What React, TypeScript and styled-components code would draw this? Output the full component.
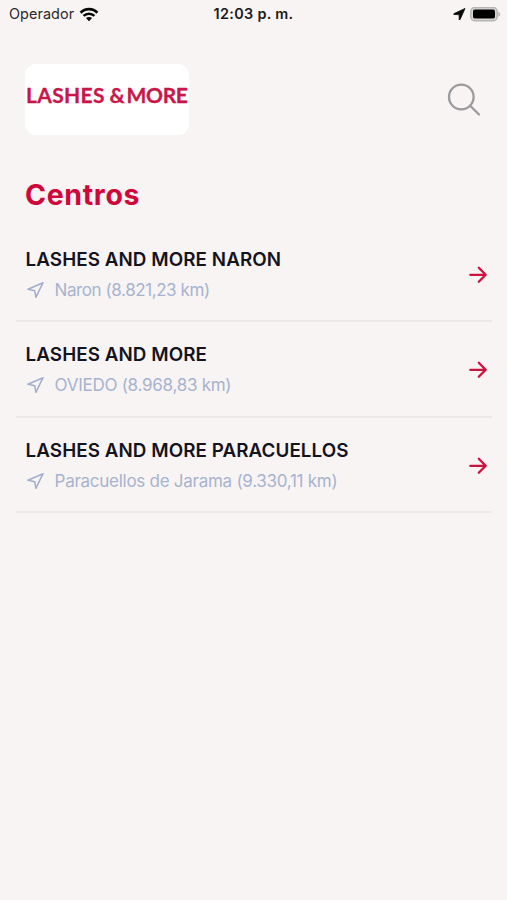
import React from 'react';
import styled, { createGlobalStyle } from 'styled-components';

const GlobalStyle = createGlobalStyle`
  * { box-sizing: border-box; }
  body {
    margin: 0;
    background: #f8f4f3;
    font-family: Inter, 'Liberation Sans', sans-serif;
  }
  h1, h2, p, ul { margin: 0; padding: 0; }
`;

const Screen = styled.div`
  width: 507px;
  height: 900px;
  background: #f8f4f3;
  overflow: hidden;
  display: flex;
  flex-direction: column;
`;

const StatusBar = styled.div`
  height: 28px;
  padding: 0 6px 0 9px;
  display: grid;
  grid-template-columns: 1fr auto 1fr;
  align-items: center;
  color: #1b191b;
`;

const Carrier = styled.div`
  display: flex;
  align-items: center;
  gap: 5px;
  font-size: 14.4px;
  line-height: 28px;
  letter-spacing: 0.08px;
  color: #2b292b;
`;

const Clock = styled.div`
  padding-right: 3px;
  font-size: 14.4px;
  font-weight: 600;
  line-height: 28px;
  letter-spacing: 0.32px;
`;

const Indicators = styled.div`
  display: flex;
  align-items: center;
  justify-content: flex-end;
  gap: 4px;
`;

const Header = styled.header`
  display: flex;
  align-items: flex-start;
  justify-content: space-between;
  padding: 36px 26px 0 25px;
`;

const Logo = styled.div`
  width: 164px;
  height: 71px;
  padding: 17px 0 0 1px;
  border-radius: 11px;
  background: #fff;
  color: #c9164a;
  font-family: Lato, sans-serif;
  font-size: 21px;
  font-weight: 700;
  line-height: 28px;
  white-space: nowrap;
  display: flex;
`;

const LogoWord = styled.span<{ $gap?: number; $tracking: number }>`
  margin-left: ${(p) => p.$gap ?? 0}px;
  letter-spacing: ${(p) => p.$tracking}px;
  -webkit-text-stroke: 0.3px #c9164a;
`;

const SearchButton = styled.button`
  margin: 19px 0 0;
  padding: 0;
  border: 0;
  background: none;
  display: flex;
`;

const Title = styled.h1`
  padding: 40px 0 0 25px;
  color: #d0073a;
  font-size: 28.5px;
  font-weight: 700;
  line-height: 40px;
  letter-spacing: 0.65px;
`;

const List = styled.ul`
  margin: 12px 15px 0 16px;
  list-style: none;
`;

const Row = styled.li`
  height: 95.4px;
  padding: 20px 4px 0 9px;
  display: flex;
  justify-content: space-between;
  border-bottom: 2px solid #ece9e9;
`;

const Name = styled.h2`
  padding-left: 0.6px;
  color: #14131e;
  font-size: 18.8px;
  font-weight: 600;
  line-height: 26px;
  letter-spacing: 0.08px;
  white-space: nowrap;
`;

const Place = styled.p`
  margin-top: 4px;
  display: flex;
  align-items: center;
  gap: 10.6px;
  color: #a6b3cf;
`;

const PlaceText = styled.span<{ $tracking: number }>`
  font-size: 17px;
  font-weight: 400;
  line-height: 26px;
  letter-spacing: ${(p) => p.$tracking}px;
  white-space: nowrap;
`;

const ArrowSlot = styled.div`
  padding-top: 19px;
`;

const WifiIcon = () => (
  <svg width="20" height="15" viewBox="0 0 20 15" fill="none" stroke="#080808" strokeWidth="2.7">
    <path d="M1.600 5.700C6.200 1 13.800 1 18.400 5.700" />
    <path d="M4.600 8.900C7.600 6 12.400 6 15.400 8.900" />
    <path d="M10 14.200 6.900 11.100C8.600 9.500 11.400 9.500 13.100 11.100Z" fill="#080808" stroke="none" />
  </svg>
);

const LocationIcon = () => (
  <svg width="13" height="12" viewBox="0 0 13 12">
    <path d="M12 .5.8 5.700c-.3.200-.2.800.1.800l5.200.1.100 5c0 .5.600.5.800.1Z" fill="#080808" stroke="#080808" strokeWidth=".8" strokeLinejoin="round" />
  </svg>
);

const BatteryIcon = () => (
  <svg width="31" height="15" viewBox="0 0 31 15">
    <rect x=".8" y=".5" width="26.400" height="13.200" rx="4" fill="#d9d6d5" stroke="#b7b4b4" strokeWidth="1.500" />
    <rect x="3" y="2.600" width="22" height="9" rx="1.800" fill="#000" />
    <path d="M28.400 4.700v5c1.200-.4 1.800-1.400 1.800-2.500S29.600 5.100 28.400 4.700Z" fill="#b7b4b4" />
  </svg>
);

const SearchIcon = () => (
  <svg width="34" height="34" viewBox="0 0 34 34" fill="none" stroke="#9a9a9e" strokeWidth="2.300" strokeLinecap="round">
    <circle cx="14.300" cy="14" r="12.300" />
    <path d="m23.200 22.800 8.800 8.700" />
  </svg>
);

const PlaceIcon = () => (
  <svg width="19" height="18" viewBox="0 0 19 18" fill="none" stroke="#a1aecb" strokeWidth="1.500" strokeLinejoin="round">
    <path d="M18 1.700 3 8.300l6.700 1.400 1.200 6.600Z" />
  </svg>
);

const ArrowIcon = () => (
  <svg width="20" height="18" viewBox="0 0 20 18" fill="none" stroke="#d0103f" strokeWidth="2.300" strokeLinecap="round" strokeLinejoin="round">
    <path d="M2.300 8.800H17.500M10.800 1.800l6.900 7-6.900 7" />
  </svg>
);

const centers = [
  { name: 'LASHES AND MORE NARON', place: 'Naron (8.821,23 km)', tracking: -0.42 },
  { name: 'LASHES AND MORE', place: 'OVIEDO (8.968,83 km)', tracking: -0.27 },
  { name: 'LASHES AND MORE PARACUELLOS', place: 'Paracuellos de Jarama (9.330,11 km)', tracking: -0.27 },
];

export default function App() {
  return (
    <Screen>
      <GlobalStyle />
      <StatusBar>
        <Carrier>
          <span>Operador</span>
          <WifiIcon />
        </Carrier>
        <Clock>12:03 p. m.</Clock>
        <Indicators>
          <LocationIcon />
          <BatteryIcon />
        </Indicators>
      </StatusBar>
      <Header>
        <Logo>
          <LogoWord $tracking={0.35}>LASHES</LogoWord>
          <LogoWord $gap={4.5} $tracking={0}>&amp;</LogoWord>
          <LogoWord $gap={2} $tracking={-0.35}>MORE</LogoWord>
        </Logo>
        <SearchButton aria-label="Buscar">
          <SearchIcon />
        </SearchButton>
      </Header>
      <Title>Centros</Title>
      <List>
        {centers.map((c) => (
          <Row key={c.name}>
            <div>
              <Name>{c.name}</Name>
              <Place>
                <PlaceIcon />
                <PlaceText $tracking={c.tracking}>{c.place}</PlaceText>
              </Place>
            </div>
            <ArrowSlot>
              <ArrowIcon />
            </ArrowSlot>
          </Row>
        ))}
      </List>
    </Screen>
  );
}
